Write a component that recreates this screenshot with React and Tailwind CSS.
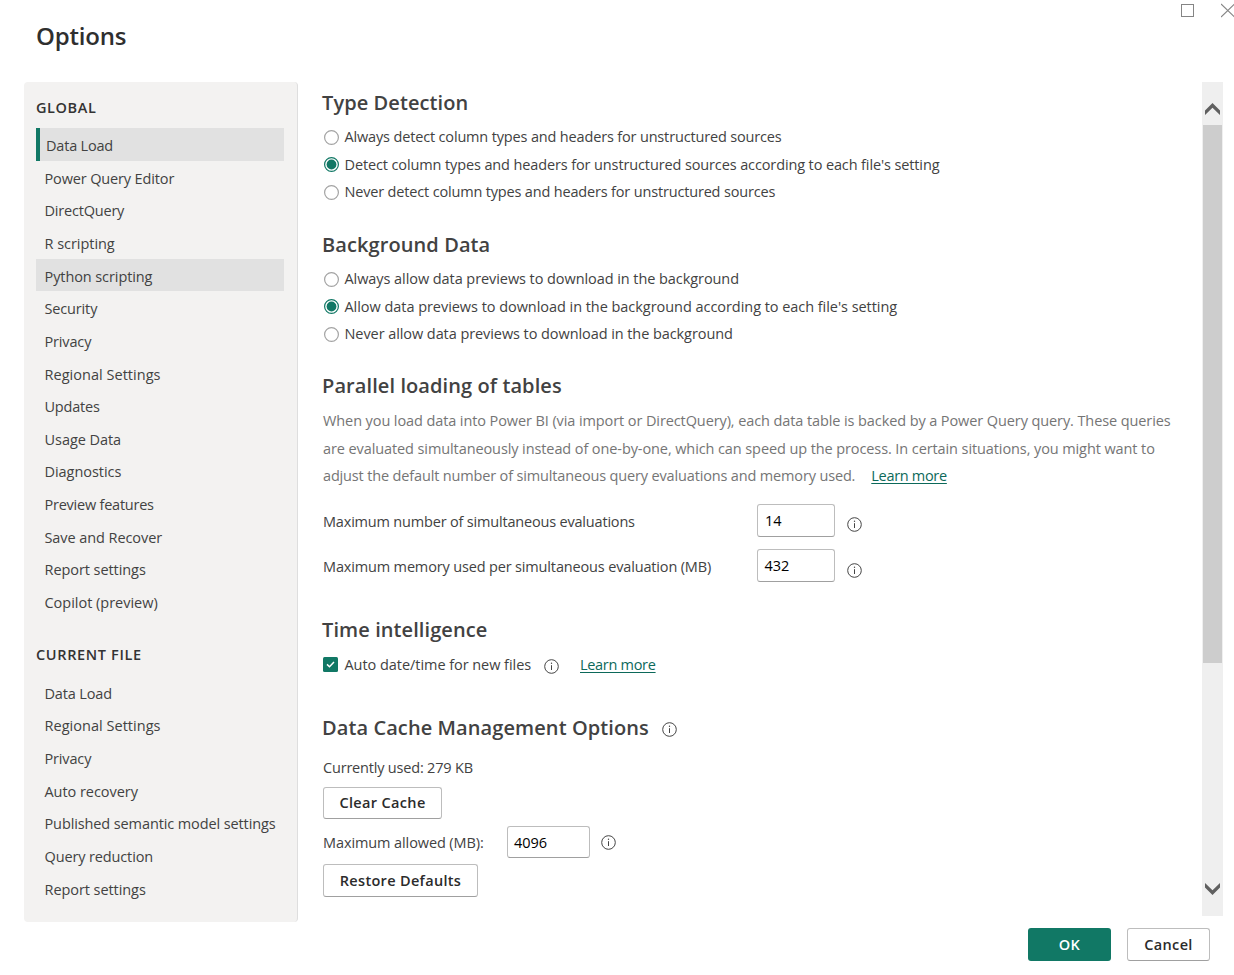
import React from "react";

const globalItems = [
  ["Data Load", "tracking-[-0.2px]"],
  ["Power Query Editor", "tracking-[-0.14px]"],
  ["DirectQuery", "tracking-[-0.2px]"],
  ["R scripting", "tracking-[-0.04px]"],
  ["Python scripting", "tracking-[-0.09px]"],
  ["Security", "tracking-[-0.15px]"],
  ["Privacy", "tracking-[-0.15px]"],
  ["Regional Settings", "tracking-[0.03px]"],
  ["Updates", "tracking-[-0.2px]"],
  ["Usage Data", "tracking-[-0.05px]"],
  ["Diagnostics", "tracking-[-0.04px]"],
  ["Preview features", "tracking-[-0.23px]"],
  ["Save and Recover", "tracking-[-0.08px]"],
  ["Report settings", "tracking-[-0.07px]"],
  ["Copilot (preview)", "tracking-[-0.02px]"],
];

const fileItems = [
  ["Data Load", "tracking-[-0.15px]"],
  ["Regional Settings", "tracking-[0.03px]"],
  ["Privacy", "tracking-[-0.15px]"],
  ["Auto recovery", "tracking-[-0.05px]"],
  ["Published semantic model settings", "tracking-[-0.11px]"],
  ["Query reduction", "tracking-[-0.13px]"],
  ["Report settings", "tracking-[-0.07px]"],
];

function NavItem({ label, tracking, selected, hovered }) {
  const state = selected
    ? "border-l-4 border-[#117865] bg-[#e1e1e1] pl-1.5"
    : hovered
      ? "bg-[#e1e1e1] pl-[8.5px]"
      : "pl-[8.5px]";
  return (
    <li className={`flex h-[32.66px] items-center whitespace-nowrap pt-[3.2px] ${state} ${tracking}`}>
      {label}
    </li>
  );
}

function Heading({ children, className }) {
  return (
    <h2 className={`flex h-7 items-center whitespace-nowrap text-[20px] font-semibold tracking-[0.09px] text-[#424242] ${className ?? ""}`}>
      {children}
    </h2>
  );
}

function Radio({ checked, children, className }) {
  return (
    <label className="flex h-[27.5px] items-center whitespace-nowrap pl-0.5">
      <svg width="15" height="15" viewBox="0 0 15 15" className="mr-[5.5px] mt-px shrink-0">
        <circle cx="7.5" cy="7.5" r="6.9" fill="#fff" stroke={checked ? "#117865" : "#a3a3a3"} strokeWidth="1.2" />
        {checked && <circle cx="7.5" cy="7.5" r="4.9" fill="#117865" />}
      </svg>
      <span className={`${checked ? "pt-[1.5px]" : ""} ${className}`}>{children}</span>
    </label>
  );
}

function Info({ className }) {
  return (
    <svg width="15" height="15" viewBox="0 0 15 15" className={`shrink-0 ${className ?? ""}`}>
      <circle cx="7.5" cy="7.5" r="6.8" fill="none" stroke="#444" strokeWidth="1" />
      <path d="M7.5 6.2V11" stroke="#444" strokeWidth="1" />
      <circle cx="7.5" cy="4.3" r="0.7" fill="#444" />
    </svg>
  );
}

function Field({ value, className }) {
  return (
    <div className={`flex shrink-0 items-center rounded-[3px] border border-[#bdbdbd] border-b-[#a0a0a0] bg-white pt-px text-black ${className}`}>
      {value}
    </div>
  );
}

function Button({ children, className }) {
  return (
    <button className={`flex shrink-0 items-center justify-center whitespace-nowrap rounded-[3px] font-semibold ${className}`}>
      {children}
    </button>
  );
}

const outline = "border border-[#bdbdbd] border-b-[#a0a0a0] bg-white text-[#2b2b2b]";

export default function App() {
  return (
    <div className="flex h-[975px] w-[1234px] flex-col overflow-hidden bg-white font-['Open_Sans','Noto_Sans',sans-serif] text-[14.5px] leading-5 text-[#424242]">
      <header className="flex h-[82px] shrink-0 items-start justify-between">
        <h1 className="pl-9 pt-[20px] text-[24px] leading-8 font-semibold tracking-[-0.2px] text-[#2f2f2f]">Options</h1>
        <div className="flex w-[53px] shrink-0 justify-between pt-[3px]">
          <svg width="15" height="15" viewBox="0 0 15 15">
            <rect x="0.5" y="1.5" width="12" height="12" fill="none" stroke="#858585" />
          </svg>
          <svg width="13" height="15" viewBox="0 0 13 15">
            <path d="M0 1L13.5 14M0 14L13.5 1" stroke="#858585" strokeWidth="1.2" />
          </svg>
        </div>
      </header>

      <div className="flex h-[840px] shrink-0">
        <nav className="ml-[23.5px] w-[274.5px] shrink-0 rounded border-r border-[#dedede] bg-[#f3f2f1] pl-[12.5px] pr-[13px]">
          <h2 className="flex h-[46px] items-center pt-1.5 text-[14.5px] font-semibold tracking-[0.6px] text-[#333]">GLOBAL</h2>
          <ul>
            {globalItems.map(([label, tracking], i) => (
              <NavItem key={label} label={label} tracking={tracking} selected={i === 0} hovered={i === 4} />
            ))}
          </ul>
          <h2 className="flex h-[58px] items-center pt-[16px] text-[14.5px] font-semibold tracking-[0.65px] text-[#333]">CURRENT FILE</h2>
          <ul>
            {fileItems.map(([label, tracking]) => (
              <NavItem key={label} label={label} tracking={tracking} />
            ))}
          </ul>
        </nav>

        <main className="ml-6 w-[880px] shrink-0 pt-[7px]">
          <Heading>Type Detection</Heading>
          <div className="pt-[6px]">
            <Radio className="tracking-[-0.16px]">Always detect column types and headers for unstructured sources</Radio>
            <Radio checked className="tracking-[-0.12px]">Detect column types and headers for unstructured sources according to each file's setting</Radio>
            <Radio className="tracking-[-0.17px]">Never detect column types and headers for unstructured sources</Radio>
          </div>

          <Heading className="mt-[25.5px]">Background Data</Heading>
          <div className="pt-[6px]">
            <Radio className="tracking-[-0.07px]">Always allow data previews to download in the background</Radio>
            <Radio checked className="tracking-[-0.045px]">Allow data previews to download in the background according to each file's setting</Radio>
            <Radio className="tracking-[-0.075px]">Never allow data previews to download in the background</Radio>
          </div>

          <Heading className="mt-[24.5px]">Parallel loading of tables</Heading>
          <p className="mt-[7px] whitespace-nowrap pl-px leading-[27.5px] text-[#757575]">
            <span className="block tracking-[-0.098px]">When you load data into Power BI (via import or DirectQuery), each data table is backed by a Power Query query. These queries</span>
            <span className="block tracking-[-0.097px]">are evaluated simultaneously instead of one-by-one, which can speed up the process. In certain situations, you might want to</span>
            <span className="block">
              <span className="tracking-[-0.155px]">adjust the default number of simultaneous query evaluations and memory used.</span>
              <a className="ml-4 tracking-[-0.3px] text-[#0c695a] underline underline-offset-2">Learn more</a>
            </span>
          </p>
          <div className="mt-[14.5px] flex h-[33px] items-center pl-px">
            <span className="w-[434px] whitespace-nowrap pt-0.5 tracking-[-0.186px]">Maximum number of simultaneous evaluations</span>
            <Field value="14" className="h-[33px] w-[78px] pl-[7px]" />
            <Info className="ml-[11.5px] mt-[7px]" />
          </div>
          <div className="mt-3 flex h-[33px] items-center pl-px">
            <span className="w-[434px] whitespace-nowrap pt-0.5 tracking-[-0.155px]">Maximum memory used per simultaneous evaluation (MB)</span>
            <Field value="432" className="h-[33px] w-[78px] pl-[6.5px]" />
            <Info className="ml-[11.5px] mt-[9px]" />
          </div>

          <Heading className="mt-[34px]">Time intelligence</Heading>
          <div className="mt-[7px] flex h-7 items-center whitespace-nowrap pl-px">
            <svg width="15" height="15" viewBox="0 0 15 15" className="mb-0.5 shrink-0">
              <rect width="15" height="15" rx="1.5" fill="#117865" />
              <path d="M4 7.4L6.5 9.7L11 5.1" fill="none" stroke="#fff" strokeWidth="1.5" />
            </svg>
            <span className="ml-[6.5px] w-[199.5px] tracking-[-0.05px]">Auto date/time for new files</span>
            <Info className="mt-[2px]" />
            <a className="ml-[21px] tracking-[-0.3px] text-[#0c695a] underline underline-offset-2">Learn more</a>
          </div>

          <div className="mt-[35px] flex h-7 items-center">
            <Heading className="w-[340px]">Data Cache Management Options</Heading>
            <Info className="mt-[2px]" />
          </div>
          <p className="mt-4 h-[20px] pl-px tracking-[-0.19px]">Currently used: 279 KB</p>
          <Button className={`ml-px mt-[9px] h-8 w-[119px] tracking-[0.35px] ${outline}`}>Clear Cache</Button>
          <div className="mt-[7px] flex h-8 items-center pl-px">
            <span className="w-[184px] whitespace-nowrap pt-0.5 tracking-[-0.1px]">Maximum allowed (MB):</span>
            <Field value="4096" className="h-8 w-[83px] pl-[6px]" />
            <Info className="ml-[11px]" />
          </div>
          <Button className={`ml-px mt-[6px] h-[33px] w-[155px] tracking-[0.32px] ${outline}`}>Restore Defaults</Button>
        </main>

        <div className="flex h-[834px] w-[21px] shrink-0 flex-col items-center justify-between bg-[#efefef]">
          <div className="flex flex-col items-center">
            <svg width="15" height="43" viewBox="0 0 15 43">
              <path d="M0 28.5L7.5 21L15 28.5V33L7.5 25.8L0 33Z" fill="#606060" />
            </svg>
            <div className="h-[538px] w-[19px] bg-[#cdcdcd]" />
          </div>
          <svg width="15" height="33" viewBox="0 0 15 33">
            <path d="M0 0V4.5L7.5 12L15 4.5V0L7.5 7.2Z" fill="#606060" />
          </svg>
        </div>
      </div>

      <footer className="flex justify-end gap-4 pr-6 pt-[6px]">
        <Button className="h-[33px] w-[83px] bg-[#117865] tracking-[0.3px] text-white">OK</Button>
        <Button className={`h-[33px] w-[83px] tracking-[0.35px] ${outline}`}>Cancel</Button>
      </footer>
    </div>
  );
}
